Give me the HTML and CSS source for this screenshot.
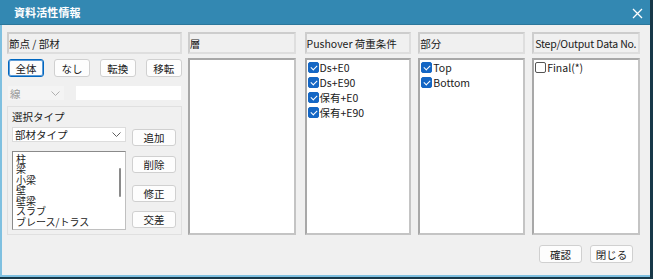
FILE: index.html
```html
<!DOCTYPE html>
<html lang="ja">
<head>
<meta charset="utf-8">
<link rel="stylesheet" href="styles.css">
</head>
<body>
<div class="dialog">
  <div class="titlebar">
    <span class="title">資料活性情報</span>
    <span class="close">
      <svg width="11" height="11" viewBox="0 0 11 11"><path d="M1 1L10 10M10 1L1 10" stroke="#fff" stroke-width="1.3"/></svg>
    </span>
  </div>
  <div class="content">
    <div class="columns">
      <div class="col col1">
        <div class="header">節点 / 部材</div>
        <div class="btnrow">
          <button class="btn sel">全体</button>
          <button class="btn">なし</button>
          <button class="btn">転換</button>
          <button class="btn">移転</button>
        </div>
        <div class="linerow">
          <div class="combo disabled"><span>線</span><svg class="chev" width="9" height="5" viewBox="0 0 9 5"><path d="M0.5 0.5L4.5 4.5L8.5 0.5" fill="none" stroke="#b0b0b0"/></svg></div>
          <div class="input"></div>
        </div>
        <div class="group">
          <div class="glabel">選択タイプ</div>
          <div class="gbody">
            <div class="gleft">
              <div class="combo"><span>部材タイプ</span><svg class="chev" width="9" height="5" viewBox="0 0 9 5"><path d="M0.5 0.5L4.5 4.5L8.5 0.5" fill="none" stroke="#606060"/></svg></div>
              <div class="typelist">
                <div class="items">
                  <div>柱</div><div>梁</div><div>小梁</div><div>壁</div><div>壁梁</div><div>スラブ</div><div>ブレース/トラス</div>
                </div>
                <div class="scroll"><div class="thumb"></div></div>
              </div>
            </div>
            <div class="gright">
              <button class="btn wide b1">追加</button>
              <button class="btn wide b2">削除</button>
              <button class="btn wide b3">修正</button>
              <button class="btn wide b4">交差</button>
            </div>
          </div>
        </div>
      </div>
      <div class="col c2">
        <div class="header">層</div>
        <div class="list"></div>
      </div>
      <div class="col c3">
        <div class="header">Pushover 荷重条件</div>
        <div class="list">
          <div class="chk"><span class="box on"></span>Ds+E0</div>
          <div class="chk"><span class="box on"></span>Ds+E90</div>
          <div class="chk"><span class="box on"></span>保有+E0</div>
          <div class="chk"><span class="box on"></span>保有+E90</div>
        </div>
      </div>
      <div class="col c4">
        <div class="header">部分</div>
        <div class="list">
          <div class="chk"><span class="box on"></span>Top</div>
          <div class="chk"><span class="box on"></span>Bottom</div>
        </div>
      </div>
      <div class="col c5">
        <div class="header tight">Step/Output Data No.</div>
        <div class="list">
          <div class="chk"><span class="box"></span>Final(*)</div>
        </div>
      </div>
    </div>
    <div class="footer">
      <button class="btn foot">確認</button>
      <button class="btn foot">閉じる</button>
    </div>
  </div>
</div>
</body>
</html>
```
FILE: styles.css
```css
* { box-sizing: border-box; }
html, body { margin: 0; padding: 0; }
body {
  width: 653px; height: 279px;
  background: #173848;
  font-family: "Noto Sans CJK JP", "Noto Sans", sans-serif;
  font-size: 10.5px;
  color: #1a1a1a;
  overflow: hidden;
}
.dialog {
  width: 650px; height: 277px;
  background: #f0f0f0;
  border-left: 2px solid #7fc0e0;
  border-bottom: 2px solid #7fc0e0;
  display: flex; flex-direction: column;
}
.titlebar {
  height: 25px;
  flex-shrink: 0;
  background: #3388b2;
  display: flex; align-items: center; justify-content: space-between;
  padding: 0 7px 0 12px;
  margin-left: -2px;
  border-bottom: 1px solid #2c779b;
}
.title {
  color: #fff; font-weight: bold; font-size: 11px; letter-spacing: 0.1px;
  margin-left: 2px;
}
.close { display: flex; margin-top: 2px; }
.content { flex: 1; padding: 7px 10px 0 5px; display: flex; flex-direction: column; }
.columns { display: flex; height: 203px; flex-shrink: 0; }
.col { display: flex; flex-direction: column; }
.col1 { width: 175px; margin-right: 6px; }
.c2 { width: 108px; margin-right: 9px; }
.c3 { width: 107px; margin-right: 7px; }
.c4 { width: 107px; margin-right: 7px; }
.c5 { width: 108px; }
.header {
  height: 22px;
  flex-shrink: 0;
  border: 2px solid #dedede;
  border-top-color: #cdcdcd; border-left-color: #cdcdcd;
  display: flex; align-items: center;
  padding-left: 0px;
  white-space: nowrap;
  overflow: hidden;
}
.header.tight { letter-spacing: -0.2px; padding-left: 1px; }
.list {
  margin-top: 4px;
  flex: 1;
  background: #fff;
  border: 2px solid #c4c4c4;
  border-top-color: #a8a8a8; border-left-color: #a8a8a8;
  padding: 0 0 0 1px;
}
.chk { display: flex; align-items: center; height: 15px; white-space: nowrap; }
.box {
  width: 11px; height: 11px; border-radius: 2px;
  border: 1px solid #555; background: #fff; margin-right: 1px;
  display: inline-block; position: relative;
}
.box.on { background: #1466c4; border-color: #1466c4; }
.box.on::after {
  content: ""; position: absolute; left: 3px; top: 1px;
  width: 3px; height: 5px;
  border-right: 1.2px solid #fff; border-bottom: 1.2px solid #fff;
  transform: rotate(45deg);
}
.btn {
  font-family: inherit; font-size: 10.5px; color: #1a1a1a;
  background: #fdfdfd;
  border: 1px solid #d0d0d0;
  border-radius: 3px;
  height: 18px; padding: 0;
  flex-shrink: 0;
  display: flex; align-items: center; justify-content: center;
}
.btn.sel { border: 1px solid #0067c0; box-shadow: inset 0 0 0 1px #5c9ad6; }
.btnrow { display: flex; justify-content: space-between; margin-top: 5px; padding-left: 1px; flex-shrink: 0; }
.btnrow .btn { width: 36px; }
.linerow { display: flex; margin-top: 8px; height: 16px; flex-shrink: 0; }
.combo {
  display: flex; align-items: center; justify-content: space-between;
  padding: 0 4px 0 2px;
  background: #fdfdfd;
  border: 1px solid #e2e2e2;
}
.combo.disabled { width: 58px; color: #9a9a9a; background: #f4f4f4; border-color: #f0f0f0; }
.input { margin-left: 10px; flex: 1; background: #fff; border: 1px solid #f0f0f0; }
.group {
  margin-top: 5px;
  flex: 1;
  min-height: 0;
  border: 1px solid #e0e0e0;
  padding: 3px 6px 4px 4px;
  display: flex; flex-direction: column;
}
.glabel { height: 14px; line-height: 14px; flex-shrink: 0; }
.gbody { display: flex; flex: 1; margin-top: 3px; min-height: 0; }
.gleft { width: 114px; display: flex; flex-direction: column; }
.gleft .combo { height: 15px; flex-shrink: 0; border-color: #dcdcdc; background: #fff; }
.typelist {
  margin-top: 9px; flex: 1;
  min-height: 0;
  background: #fff;
  border: 1px solid #8a8a8a;
  border-right-color: #c0c0c0; border-bottom-color: #c0c0c0;
  display: flex;
  overflow: hidden;
}
.items { flex: 1; padding: 1.5px 0 0 3px; line-height: 10.5px; font-size: 10px; white-space: nowrap; }
.scroll { width: 10px; position: relative; }
.thumb { position: absolute; left: 4px; top: 16px; width: 2px; height: 29px; background: #8a8a8a; border-radius: 1px; }
.gright { margin-left: 6px; flex: 1; position: relative; }
.btn.wide { width: 44px; height: 17px; position: absolute; left: 0; }
.b1 { top: 2px; }
.b2 { top: 29px; }
.b3 { top: 58px; }
.b4 { top: 84px; }
.footer { display: flex; justify-content: flex-end; gap: 8px; margin-top: 10px; padding-right: 7px; }
.btn.foot { width: 43px; height: 18px; }
```
